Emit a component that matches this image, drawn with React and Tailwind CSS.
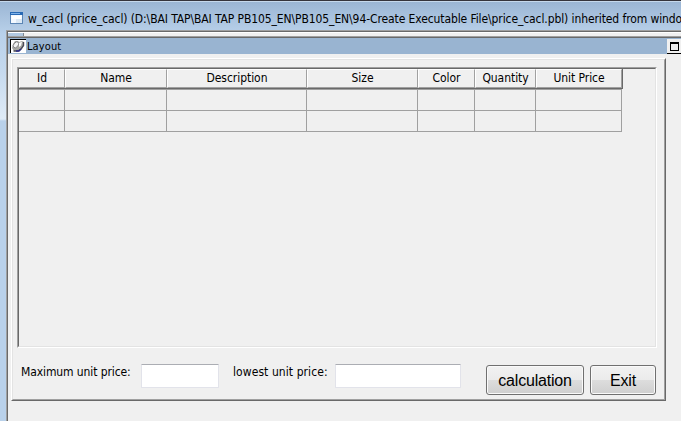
const columns = [
  { name: 'Id', cell: 'w-[46px]' },
  { name: 'Name', cell: 'w-[102px]' },
  { name: 'Description', cell: 'w-[140px]' },
  { name: 'Size', cell: 'w-[111px]' },
  { name: 'Color', cell: 'w-[57px]' },
  { name: 'Quantity', cell: 'w-[61px]' },
  { name: 'Unit Price', cell: 'w-[86px]' },
];

function WindowIcon() {
  return (
    <svg width="14" height="13" viewBox="0 0 14 13" className="shrink-0" shapeRendering="crispEdges">
      <rect x="0.5" y="0.5" width="12" height="11" fill="#f4f9ff" stroke="#5c86b5" />
      <rect x="0" y="0" width="13" height="3" fill="#2869b5" />
      <rect x="1" y="1" width="9" height="1" fill="#80b3e8" />
      <rect x="2" y="4" width="9" height="3" fill="#ffffff" />
      <rect x="6" y="7" width="6" height="4" fill="#dce9f5" />
    </svg>
  );
}

function PinIcon() {
  return (
    <svg width="16" height="14" viewBox="0 0 16 14" className="shrink-0">
      <rect width="16" height="14" fill="#fff" />
      <path d="M0 .5H16M.5 0V14" stroke="#000" />
      <path d="M3 5l2-3h3l1 1 3-1 2 1v3l-2 4-3 2H4L2 9z" fill="#a9a9a4" />
      <path d="M13.5 3v3.5L11 10l-3 2H3.5" fill="none" stroke="#4a4a56" strokeWidth="1.4" />
      <ellipse cx="6" cy="5.8" rx="2.2" ry="3.4" transform="rotate(40 6 5.8)" fill="#f2f2f2" stroke="#77777a" strokeWidth=".8" />
      <path d="M9 4l3-1.2-1 3.6-2 1.6z" fill="#fff" />
      <path d="M6 12h3l2-2" fill="none" stroke="#2b2b86" strokeWidth="1.5" />
    </svg>
  );
}

function Row() {
  return (
    <div className="flex h-[21px]">
      {columns.map((c) => (
        <div key={c.name} className={`${c.cell} border-r border-b border-[#a0a0a0]`} />
      ))}
    </div>
  );
}

export default function App() {
  return (
    <div className="flex h-[421px] w-[681px] flex-col overflow-hidden bg-[linear-gradient(#99b4d3_0px,#b9d1ea_34px,#c5d9ee_70px,#dfebf7_119px,#b9d1ea_121px)] font-['DejaVu_Sans_Condensed','DejaVu_Sans',sans-serif] text-[12px] text-black">
      <div className="flex h-[30px] shrink-0 items-start border-t border-[#35343c] pl-[10px] shadow-[inset_0_1px_0_#c5d8ec]">
        <div className="mt-[11px]">
          <WindowIcon />
        </div>
        <div className="mt-[10px] ml-[4px] leading-4 tracking-[-0.1px] whitespace-nowrap">
          w_cacl (price_cacl) (D:\BAI TAP\BAI TAP PB105_EN\PB105_EN\94-Create Executable File\price_cacl.pbl) inherited from window
        </div>
      </div>

      <div className="ml-[6px] flex grow flex-col border-t border-l border-[#a0a0a0]">
        <div className="flex grow flex-col border-t border-l border-[#696969] bg-[#f0f0f0]">
          <div className="flex h-1 shrink-0 border-t border-white">
            <div className="w-4 border-r border-[#808890] bg-[#b2c9e1]" />
          </div>
          <div className="h-[2px] shrink-0 border-t border-b border-t-[#a0a0a0] border-b-[#696969]" />
          <div className="flex h-4 shrink-0 items-center bg-[#99b4d1] pl-[2px]">
            <PinIcon />
            <span className="ml-px pt-[2px] text-[11px] leading-4 tracking-[0.1px]">Layout</span>
            <div className="ml-auto h-[15px] w-[14px] border-b border-black bg-[#f0f0f0] pt-[3px] pl-[3px]">
              <div className="h-[9px] w-[9px] border border-t-2 border-black" />
            </div>
          </div>

          <div className="mt-[4px] ml-[3px] h-[343px] w-[655px] border border-t-white border-r-[#696969] border-b-[#696969] border-l-white">
            <div className="flex h-full flex-col border border-t-[#e3e3e3] border-r-[#a0a0a0] border-b-[#a0a0a0] border-l-[#e3e3e3] pt-[7px] pl-[4px]">
              <div className="h-[281px] w-[640px] shrink-0 border border-t-[#a0a0a0] border-r-white border-b-white border-l-[#a0a0a0]">
                <div className="h-full border border-t-[#696969] border-r-[#e3e3e3] border-b-[#e3e3e3] border-l-[#696969]">
                  <div className="flex h-[20px] w-[604px] border-r border-b border-[#696969]">
                    {columns.map((c) => (
                      <div key={c.name} className={`${c.cell} border border-t-white border-r-[#a0a0a0] border-b-[#a0a0a0] border-l-white text-center leading-4 tracking-[-0.05px]`}>
                        {c.name}
                      </div>
                    ))}
                  </div>
                  <div className="h-px w-[603px] bg-[#a0a0a0]" />
                  <Row />
                  <Row />
                </div>
              </div>

              <div className="flex items-start pt-4 pl-[4px]">
                <span className="w-[120px] leading-4 tracking-[-0.1px] whitespace-nowrap">Maximum unit price:</span>
                <input className="h-6 w-[78px] rounded-[1px] border border-[#e2e3ea] border-t-[#abadb3] bg-white" />
                <span className="ml-[14px] w-[102px] leading-4 tracking-[0.08px] whitespace-nowrap">lowest unit price:</span>
                <input className="h-6 w-[126px] rounded-[1px] border border-[#e2e3ea] border-t-[#abadb3] bg-white" />
                <button className="mt-px ml-[25px] h-[30px] w-[98px] rounded-[3px] border border-[#707070] bg-[linear-gradient(#f2f2f2_0%,#ebebeb_49%,#dddddd_50%,#cfcfcf_100%)] pt-px font-['Liberation_Sans',sans-serif] text-[16px] leading-5 tracking-[-0.2px] shadow-[inset_0_0_0_1px_#fafafa]">
                  calculation
                </button>
                <button className="mt-px ml-[6px] h-[30px] w-[66px] rounded-[3px] border border-[#707070] bg-[linear-gradient(#f2f2f2_0%,#ebebeb_49%,#dddddd_50%,#cfcfcf_100%)] pt-px font-['Liberation_Sans',sans-serif] text-[16px] leading-5 tracking-[-0.2px] shadow-[inset_0_0_0_1px_#fafafa]">
                  Exit
                </button>
              </div>
            </div>
          </div>
        </div>
      </div>
    </div>
  );
}
